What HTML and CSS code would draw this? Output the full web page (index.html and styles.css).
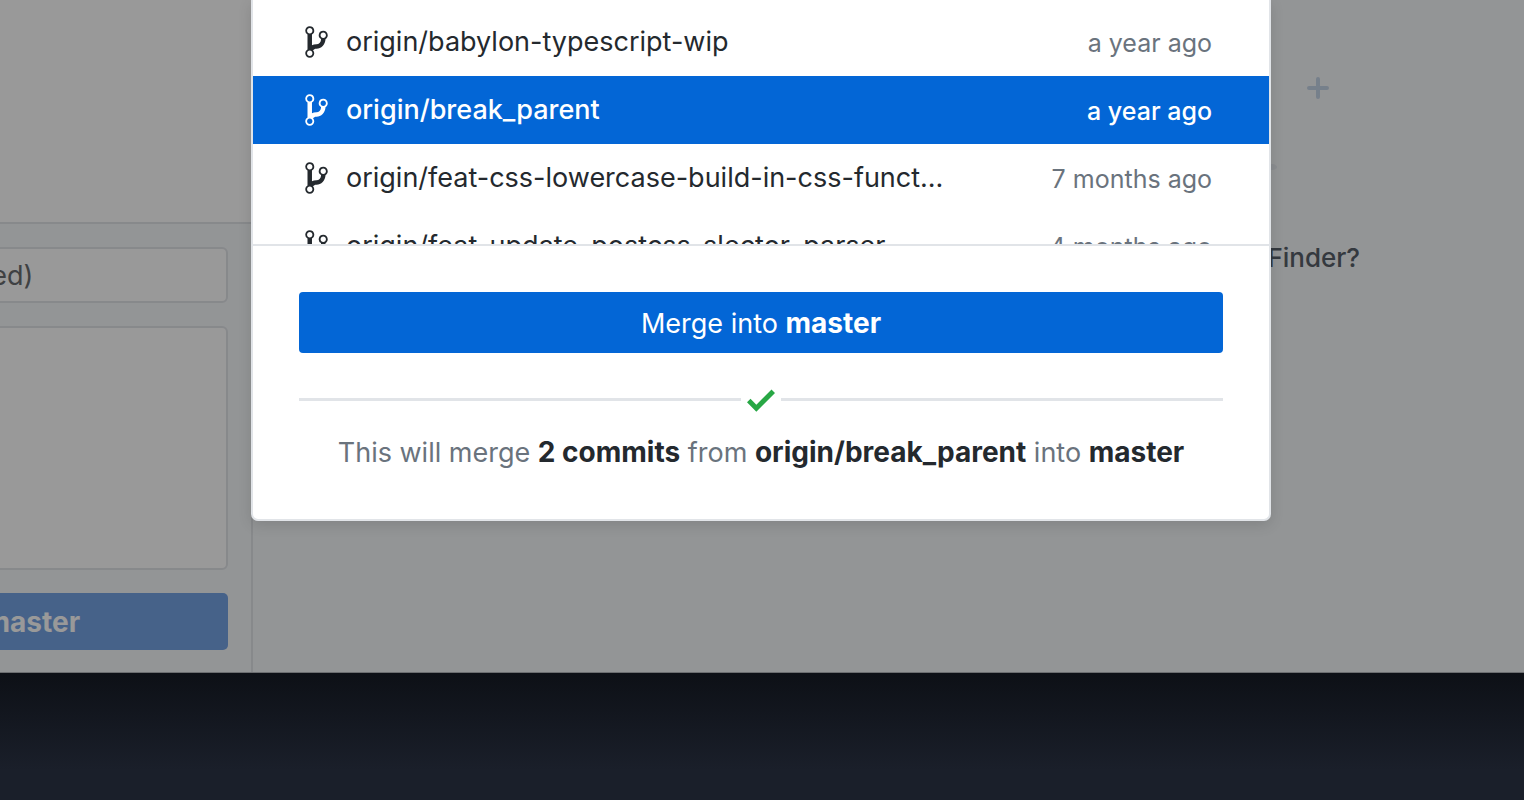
FILE: index.html
```html
<!DOCTYPE html>
<html lang="en">
<head>
    <meta charset="UTF-8">
    <meta name="viewport" content="width=device-width, initial-scale=1.0">
    <title>Merge branch</title>
    <link rel="stylesheet" href="styles.css">
</head>
<body>
    <svg class="symbols" aria-hidden="true">
        <symbol id="git-branch" viewBox="0 0 10 16">
            <path d="M10 5c0-1.11-.89-2-2-2a1.993 1.993 0 0 0-1 3.72v.3c-.02.52-.23.98-.63 1.38-.4.4-.86.61-1.38.63-.83.02-1.48.16-2 .45V4.72a1.993 1.993 0 0 0-1-3.72C.88 1 0 1.89 0 3a2 2 0 0 0 1 1.72v6.56c-.59.35-1 .99-1 1.72 0 1.11.89 2 2 2 1.11 0 2-.89 2-2 0-.53-.2-1-.53-1.36.09-.06.48-.41.59-.47.25-.11.56-.17.94-.17 1.05-.05 1.95-.45 2.75-1.25S8.95 7.77 9 6.73h-.02C9.59 6.37 10 5.73 10 5zM2 1.8c.66 0 1.2.55 1.2 1.2 0 .65-.55 1.2-1.2 1.2C1.35 4.2.8 3.65.8 3c0-.65.55-1.2 1.2-1.2zm0 12.41c-.66 0-1.2-.55-1.2-1.2 0-.65.55-1.2 1.2-1.2.65 0 1.2.55 1.2 1.2 0 .65-.55 1.2-1.2 1.2zm6-8c-.66 0-1.2-.55-1.2-1.2 0-.65.55-1.2 1.2-1.2.65 0 1.2.55 1.2 1.2 0 .65-.55 1.2-1.2 1.2z"/>
        </symbol>
    </svg>

    <div class="app">
        <aside class="sidebar">
            <div class="changes"></div>
            <form class="commit-form">
                <input class="summary" type="text" placeholder="Summary (required)" aria-label="Summary">
                <textarea class="description" aria-label="Description"></textarea>
                <button class="commit-button" type="button">Commit to <strong>master</strong></button>
            </form>
        </aside>
        <main class="content">
            <svg class="art" viewBox="0 0 100 120" aria-hidden="true">
                <path d="M50 9v18M41 18h18" stroke="#c5d6e8" stroke-width="4" stroke-linecap="round"/>
                <ellipse cx="4" cy="97" rx="5" ry="3" fill="#e6ebf1"/>
            </svg>
            <p class="hint">Finder?</p>
        </main>
        <div class="overlay"></div>
    </div>

    <div class="dialog-layer">
        <div class="dialog" role="dialog" aria-label="Merge branch">
            <ul class="branches">
                <li class="branch">
                    <svg class="branch-icon"><use href="#git-branch"/></svg>
                    <span class="name">origin/babylon-typescript-wip</span>
                    <span class="date">a year ago</span>
                </li>
                <li class="branch selected">
                    <svg class="branch-icon"><use href="#git-branch"/></svg>
                    <span class="name">origin/break_parent</span>
                    <span class="date">a year ago</span>
                </li>
                <li class="branch">
                    <svg class="branch-icon"><use href="#git-branch"/></svg>
                    <span class="name">origin/feat-css-lowercase-build-in-css-funct...</span>
                    <span class="date">7 months ago</span>
                </li>
                <li class="branch">
                    <svg class="branch-icon"><use href="#git-branch"/></svg>
                    <span class="name">origin/feat_update_postcss_slector_parser</span>
                    <span class="date">4 months ago</span>
                </li>
            </ul>
            <div class="footer">
                <button class="merge-button" type="button">Merge into <strong>master</strong></button>
                <div class="status">
                    <svg class="check" viewBox="0 0 12 16" aria-hidden="true">
                        <path d="M12 5l-8 8-4-4 1.5-1.5L4 10l6.5-6.5z"/>
                    </svg>
                </div>
                <p class="message">This will merge <strong>2 commits</strong> from <strong>origin/break_parent</strong> into <strong>master</strong></p>
            </div>
        </div>
    </div>
</body>
</html>
```

FILE: styles.css
```css
* {
    box-sizing: border-box;
}
body {
    margin: 0;
    min-height: 100vh;
    display: flex;
    flex-direction: column;
    position: relative;
    overflow: hidden;
    font-family: Inter, "Liberation Sans", sans-serif;
    font-size: 27px;
    line-height: 32px;
    color: #24292e;
    background: linear-gradient(#0d1016 calc(100% - 128px), #1a1f2a calc(100% - 30px));
}
strong {
    font-size: 28px;
}
.symbols {
    position: absolute;
    width: 0;
    height: 0;
}

/* window behind the dialog */
.app {
    display: flex;
    position: relative;
    min-height: calc(100vh - 127px);
    margin-left: -326px;
    background: #f6f8fa;
    border-bottom: 1px solid #b4b8bd;
}
.sidebar {
    display: flex;
    flex-direction: column;
    width: 579px;
    border-right: 2px solid #e1e4e8;
}
.changes {
    flex: 1;
    background: #fff;
    border-bottom: 2px solid #e1e4e8;
}
.commit-form {
    display: flex;
    flex-direction: column;
    gap: 23px;
    padding: 23px 23px 22px 24px;
}
.summary,
.description {
    font: inherit;
    background: #fff;
    border: 2px solid #e1e4e8;
    border-radius: 6px;
    outline: none;
}
.summary {
    height: 56px;
    margin-left: 64px;
    padding: 0 14px;
}
.summary::placeholder {
    color: #6a6d70;
    opacity: 1;
}
.description {
    height: 244px;
    resize: none;
}
.commit-button {
    height: 57px;
    padding: 2px 0 0;
    font: inherit;
    color: #fff;
    background: #76a3e4;
    border: 0;
    border-radius: 5px;
}
.content {
    flex: 1;
    display: flex;
    flex-direction: column;
    align-items: flex-end;
    padding: 70px 164px 0 0;
}
.art {
    width: 100px;
    height: 120px;
    fill: none;
    margin-right: -8px;
}
.hint {
    margin: 52px 0 0;
    font-size: 26px;
    color: #586069;
    font-weight: 500;
}
.overlay {
    position: absolute;
    inset: 0 0 -1px;
    background: rgba(0, 0, 0, 0.4);
}

/* merge dialog */
.dialog-layer {
    position: absolute;
    top: 0;
    left: 0;
    right: 2px;
    display: flex;
    justify-content: center;
}
.dialog {
    width: 1020px;
    background: #fff;
    border: 2px solid #e1e4e8;
    border-top: 0;
    border-radius: 0 0 7px 7px;
    box-shadow: 0 4px 14px rgba(0, 0, 0, 0.12);
}
.branches {
    height: 244px;
    margin: 0;
    padding: 8px 0 0;
    list-style: none;
    overflow: hidden;
}
.branch {
    display: flex;
    align-items: center;
    height: 68px;
    padding: 0 57px 0 51px;
}
.branch-icon {
    width: 25px;
    height: 36px;
    margin-right: 17px;
    fill: #24292e;
}
.name {
    flex: 1;
}
.date {
    padding-top: 2px;
    font-size: 25px;
    color: #6a737d;
}
.selected,
.selected .date {
    color: #fff;
    font-weight: 500;
}
.selected {
    background: #0366d6;
}
.selected .branch-icon {
    fill: #fff;
}
.footer {
    padding: 46px 46px 50px;
    border-top: 2px solid #e1e4e8;
}
.merge-button {
    display: block;
    width: 100%;
    height: 61px;
    padding: 2px 0 0;
    font: inherit;
    color: #fff;
    background: #0366d6;
    border: 0;
    border-radius: 4px;
}
.status {
    display: flex;
    align-items: center;
    gap: 6px;
    height: 36px;
    margin-top: 28px;
}
.status::before,
.status::after {
    content: "";
    flex: 1;
    height: 3px;
    background: #e1e4e8;
}
.check {
    width: 28px;
    height: 38px;
    margin-top: 2px;
    fill: #28a745;
}
.message {
    margin: 19px 0 0;
    text-align: center;
    color: #6a737d;
}
.message strong {
    color: #24292e;
}
```
